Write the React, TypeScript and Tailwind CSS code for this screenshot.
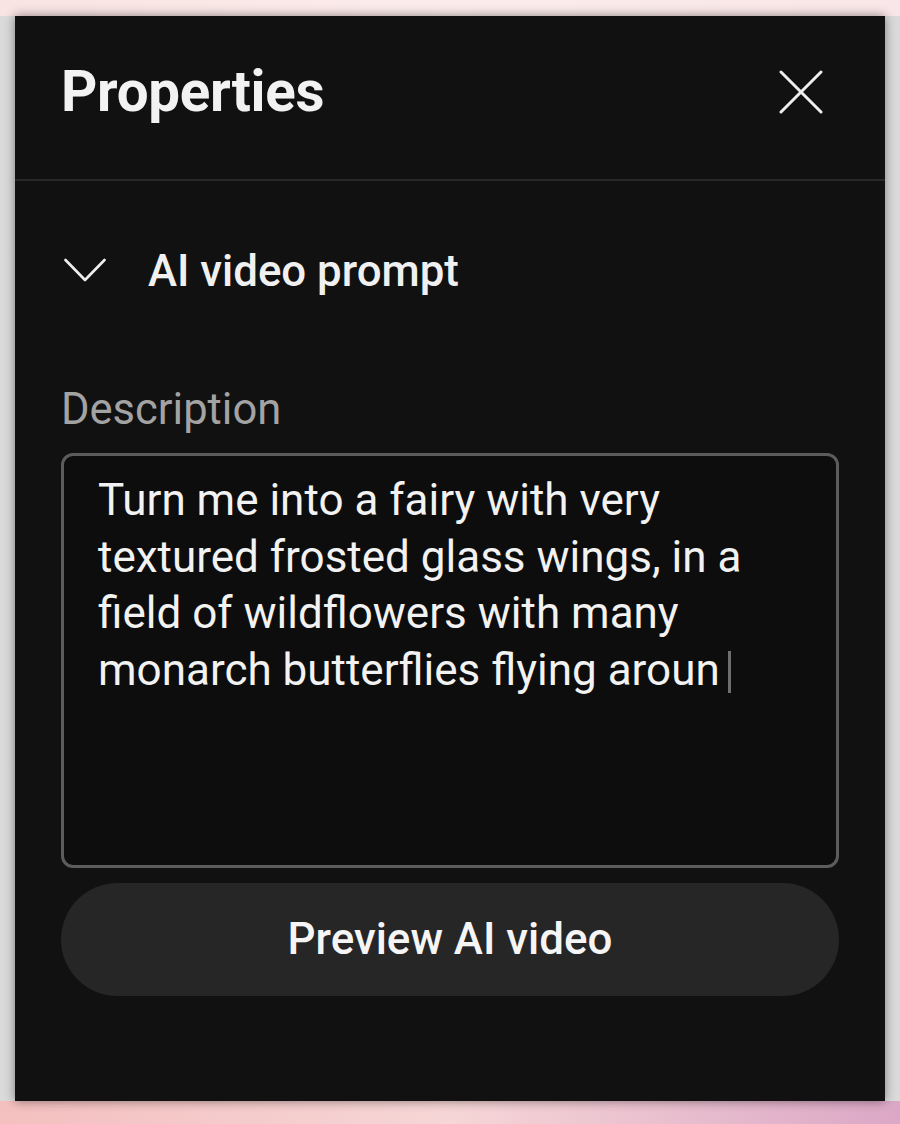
export default function App() {
  return (
    <div className="w-[900px] h-[1124px] flex flex-col overflow-hidden" style={{ fontFamily: "Roboto, 'Noto Sans', sans-serif" }}>
      <div className="h-[16px] bg-gradient-to-r from-[#f8e4e2] via-[#fbeceb] to-[#f9e6e8]" />
      <div className="flex-1 flex bg-gradient-to-r from-[#dadada] via-[#e4e4e4] to-[#dadada] px-[15px] relative z-10">
        <div className="flex-1 flex flex-col bg-[#111111] shadow-[0_0_10px_rgba(0,0,0,0.45)]">
          {/* header */}
          <div className="h-[165px] flex items-center justify-between pl-[46px] pr-[62px] border-b-2 border-[#282828] pb-[11px]">
            <h1 className="text-[56.5px] leading-[64px] font-bold text-[#f2f2f2] tracking-[-0.3px]">Properties</h1>
            <svg width="44" height="44" viewBox="0 0 44 44" className="text-[#eeeeee]">
              <path d="M2 2 42 42 M42 2 2 42" stroke="currentColor" strokeWidth="3" strokeLinecap="round" fill="none" />
            </svg>
          </div>

          {/* section */}
          <div className="h-[60px] flex items-center mt-[60px] pl-[49px]">
            <svg width="42" height="26" viewBox="0 0 42 26" className="text-[#eeeeee]">
              <path d="M1.5 2 21 22 40.5 2" stroke="currentColor" strokeWidth="2.6" strokeLinecap="round" strokeLinejoin="round" fill="none" />
            </svg>
            <span className="ml-[42px] text-[43.8px] leading-[50px] font-medium text-[#f0f0f0]">AI video prompt</span>
          </div>

          <div className="px-[46px] mt-[84px]">
            <div className="text-[43.5px] leading-[50px] text-[#a3a3a3]">Description</div>
            <div className="mt-[18px] h-[415px] rounded-[12px] border-[3px] border-[#5c5c5c] bg-[#0d0d0d] pl-[34px] pr-[20px] pt-[16px]">
              <p className="text-[44px] leading-[56.5px] text-[#f2f2f2] whitespace-nowrap">
                Turn me into a fairy with very
                <br />
                textured frosted glass wings, in a
                <br />
                field of wildflowers with many
                <br />
                monarch butterflies flying aroun
                <span className="inline-block w-[3px] h-[42px] bg-[#6e6e6e] align-[-8px] ml-[8px]" />
              </p>
            </div>
            <button className="mt-[15px] w-full h-[113px] rounded-full bg-[#262626] text-[43.9px] font-medium text-[#f5f5f5]">
              Preview AI video
            </button>
          </div>
        </div>
      </div>
      <div className="h-[23px] bg-gradient-to-r from-[#f4bfbf] via-[#f6d6d6] to-[#dba7c6]" />
    </div>
  );
}
